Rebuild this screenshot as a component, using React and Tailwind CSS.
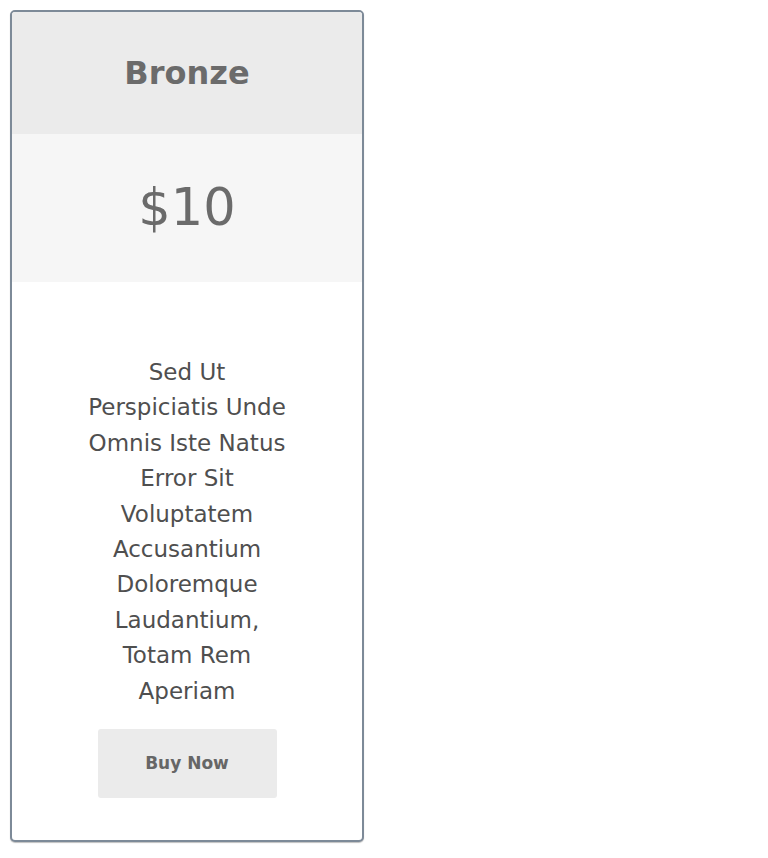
const lines = [
    "Sed Ut",
    "Perspiciatis Unde",
    "Omnis Iste Natus",
    "Error Sit",
    "Voluptatem",
    "Accusantium",
    "Doloremque",
    "Laudantium,",
    "Totam Rem",
    "Aperiam",
];

export default function App() {
    return (
        <div className="min-h-screen bg-white p-[10px]" style={{ fontFamily: '"DejaVu Sans", "Liberation Sans", sans-serif' }}>
            <div className="w-[354px] overflow-hidden rounded-[5px] border-2 border-[#7d8a98] bg-white shadow-[0_1px_1px_rgba(0,0,0,0.25)]">
                <div className="flex h-[122px] items-center justify-center bg-[#ebebeb]">
                    <h2 className="text-[32px] font-bold text-[#6b6b6b]">Bronze</h2>
                </div>
                <div className="flex h-[148px] items-center justify-center bg-[#f6f6f6]">
                    <p className="text-[51px] text-[#6b6b6b]">$10</p>
                </div>
                <div className="flex flex-col items-center pt-[73px] pb-[42px]">
                    <p className="text-center text-[23px] leading-[35.4px] text-[#4f4f4f]">
                        {lines.map((l, i) => (
                            <span key={i} className="block">{l}</span>
                        ))}
                    </p>
                    <button className="mt-[20px] h-[69px] w-[179px] rounded-[3px] bg-[#ebebeb] text-[17px] font-bold text-[#666]">
                        Buy Now
                    </button>
                </div>
            </div>
        </div>
    );
}
